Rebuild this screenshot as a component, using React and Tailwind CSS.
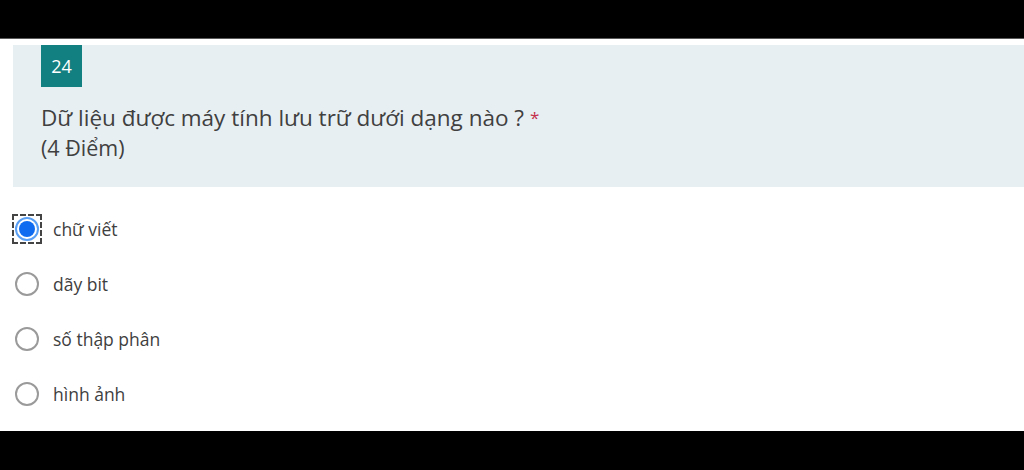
export default function App() {
  const options = ['chữ viết', 'dãy bit', 'số thập phân', 'hình ảnh'];
  return (
    <div className="flex h-[470px] w-[1024px] flex-col overflow-hidden bg-black" style={{ fontFamily: '"Open Sans", "Noto Sans", sans-serif' }}>
      <div className="h-[39px] shrink-0 border-b border-[#5a5a5a]" />
      <div className="flex h-[392px] flex-col bg-white pt-[6px]">
        <div className="ml-[13px] h-[142px] bg-[#e8eff3] pl-[28px]">
          <div className="flex h-[42px] w-[41px] items-center justify-center bg-[#127f80] text-[18px] text-white">24</div>
          <p className="mt-[15px] text-[22.5px] leading-[31px] text-[#404040]">
            Dữ liệu được máy tính lưu trữ dưới dạng nào ? <span className="align-top text-[17px] text-[#c4314b]">*</span>
          </p>
          <p className="text-[21.5px] leading-[30px] text-[#404040]">(4 Điểm)</p>
        </div>
        <div className="mt-[30px] flex flex-col gap-[31px] pl-[12px]">
          {options.map((o, i) => (
            <div key={o} className="flex h-[24px] items-center">
              <div className={`flex h-[30px] w-[30px] items-center justify-center ${i === 0 ? 'border-2 border-dashed border-[#444]' : ''}`}>
                {i === 0 ? (
                  <div className="flex h-[24px] w-[24px] items-center justify-center rounded-full border-2 border-[#5aa0f5] bg-white">
                    <div className="h-[16px] w-[16px] rounded-full bg-[#0f6cf0]" />
                  </div>
                ) : (
                  <div className="h-[24px] w-[24px] rounded-full border-2 border-[#9a9a9a] bg-white" />
                )}
              </div>
              <span className="ml-[11px] text-[17.5px] text-[#404040]">{o}</span>
            </div>
          ))}
        </div>
      </div>
    </div>
  );
}
